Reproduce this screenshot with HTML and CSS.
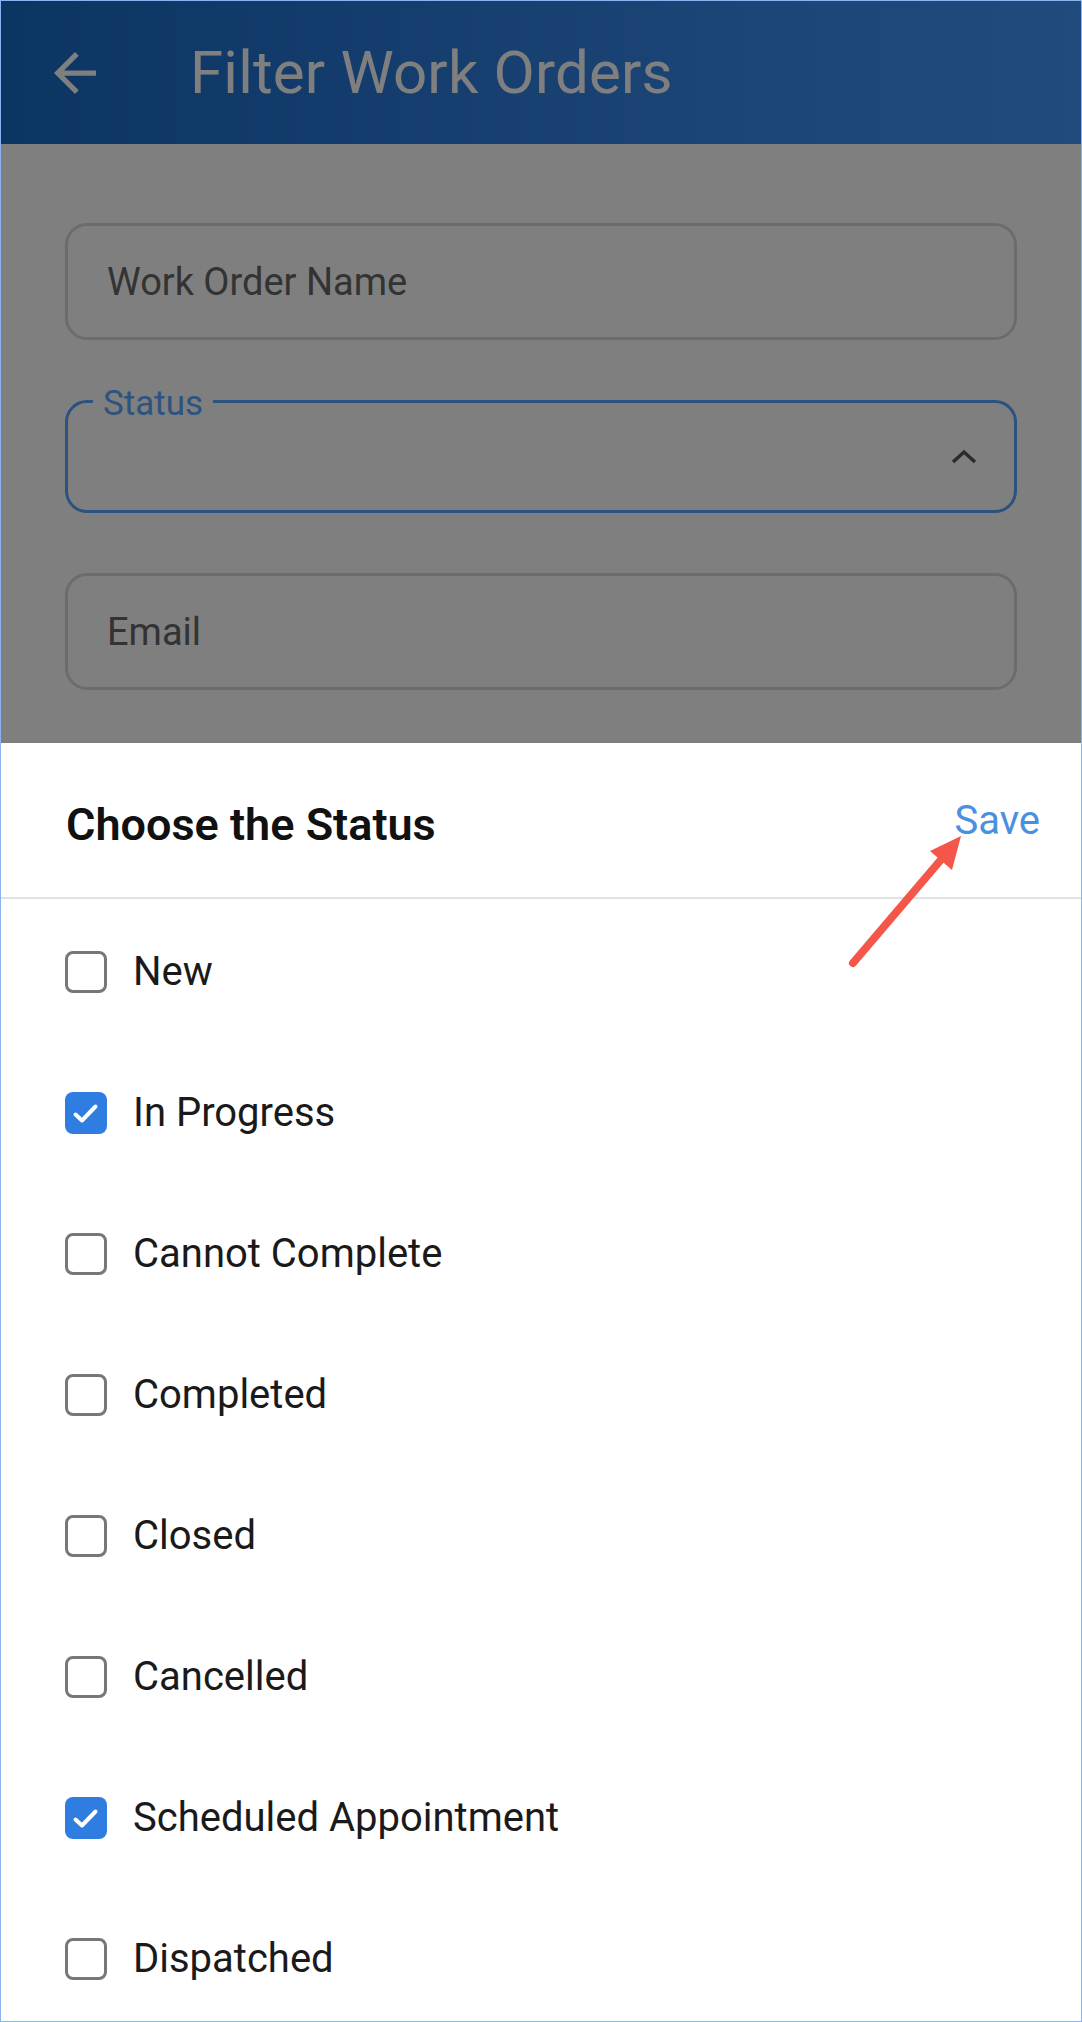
FILE: index.html
```html
<!DOCTYPE html>
<html lang="en">
<head>
    <meta charset="UTF-8">
    <meta name="viewport" content="width=device-width, initial-scale=1.0">
    <title>Filter Work Orders</title>
    <link rel="stylesheet" href="styles.css">
</head>
<body>

    <div class="screen">

        <!-- Page behind the sheet -->
        <div class="page">
            <header class="app-bar">
                <span class="back-btn">
                    <svg viewBox="4 4 16 16" width="42" height="42">
                        <path d="M20 11H7.83l5.59-5.59L12 4l-8 8 8 8 1.41-1.41L7.83 13H20v-2z" fill="#fff"/>
                    </svg>
                </span>
                <h1 class="app-title">Filter Work Orders</h1>
            </header>

            <div class="filter-form">
                <div class="field">
                    <span class="placeholder">Work Order Name</span>
                </div>
                <div class="field field-active">
                    <span class="field-label">Status</span>
                    <svg class="chevron" viewBox="0 0 26 15" width="26" height="15">
                        <polyline points="2,13 13,3 24,13" fill="none" stroke="#55555f" stroke-width="3.5"/>
                    </svg>
                </div>
                <div class="field">
                    <span class="placeholder">Email</span>
                </div>
            </div>

            <!-- dim layer -->
            <div class="scrim"></div>
        </div>

        <!-- Bottom sheet -->
        <div class="sheet">
            <div class="sheet-head">
                <h2 class="sheet-title">Choose the Status</h2>
                <span class="save-btn">Save</span>
            </div>

            <ul class="status-list">
                <li class="status-item"><span class="check"></span>New</li>
                <li class="status-item"><span class="check checked"><svg viewBox="0 0 42 42" width="42" height="42"><polyline points="10.5,22.5 17,28.5 30.5,14.5" fill="none" stroke="#fff" stroke-width="4" stroke-linecap="round" stroke-linejoin="round"/></svg></span>In Progress</li>
                <li class="status-item"><span class="check"></span>Cannot Complete</li>
                <li class="status-item"><span class="check"></span>Completed</li>
                <li class="status-item"><span class="check"></span>Closed</li>
                <li class="status-item"><span class="check"></span>Cancelled</li>
                <li class="status-item"><span class="check checked"><svg viewBox="0 0 42 42" width="42" height="42"><polyline points="10.5,22.5 17,28.5 30.5,14.5" fill="none" stroke="#fff" stroke-width="4" stroke-linecap="round" stroke-linejoin="round"/></svg></span>Scheduled Appointment</li>
                <li class="status-item"><span class="check"></span>Dispatched</li>
            </ul>

            <!-- annotation arrow pointing at Save -->
            <svg class="pointer" viewBox="0 0 140 160" width="140" height="160">
                <line x1="12" y1="140" x2="104" y2="32" stroke="#f4564a" stroke-width="8" stroke-linecap="round"/>
                <polygon points="120,13 89,28 111,47" fill="#f4564a"/>
            </svg>
        </div>

    </div>

</body>
</html>
```

FILE: styles.css
```css
* {
    margin: 0;
    padding: 0;
    box-sizing: border-box;
    font-family: Roboto, "Liberation Sans", Arial, sans-serif;
}

body {
    width: 1082px;
    height: 2022px;
    background: #fff;
}

/* Phone screen with thin frame */
.screen {
    width: 1082px;
    height: 2022px;
    border: 1px solid #8ab4f0;
    overflow: hidden;
    display: flex;
    flex-direction: column;
}

/* Page under the sheet */
.page {
    position: relative;
    flex-shrink: 0;
    height: 742px;
    background: #fff;
}

.app-bar {
    height: 143px;
    display: flex;
    align-items: center;
    padding-left: 53px;
    background: linear-gradient(90deg, #176ac6 0%, #3a8cf0 70%, #4296f8 100%);
}

.back-btn {
    display: flex;
    width: 42px;
    height: 42px;
}

.app-title {
    margin-left: 94px;
    font-size: 60px;
    font-weight: 400;
    color: #fff;
    letter-spacing: 0.2px;
}

.filter-form {
    display: flex;
    flex-direction: column;
    gap: 60px;
    padding: 79px 64px 0;
}

.field {
    position: relative;
    height: 117px;
    border: 3px solid #d8d8dc;
    border-radius: 22px;
    display: flex;
    align-items: center;
    padding: 0 39px;
}

.placeholder {
    font-size: 38px;
    line-height: 1;
    color: #666;
}

.field-active {
    height: 113px;
    border-color: #58a4ff;
    justify-content: flex-end;
    padding-right: 37px;
}

.field-label {
    position: absolute;
    left: 25px;
    top: -17px;
    padding: 0 10px;
    background: #fff;
    font-size: 35px;
    line-height: 35px;
    color: #5aa6ff;
}

.chevron {
    display: block;
}

/* Dim layer over the page */
.scrim {
    position: absolute;
    inset: 0;
    background: rgba(0, 0, 0, 0.5);
}

/* Bottom sheet */
.sheet {
    position: relative;
    flex: 1;
    min-height: 0;
    background: #fff;
}

.sheet-head {
    height: 156px;
    display: flex;
    align-items: center;
    justify-content: space-between;
    padding: 8px 41px 0 65px;
    border-bottom: 2px solid #dee2e6;
}

.sheet-title {
    font-size: 45px;
    font-weight: 600;
    color: #111;
}

.save-btn {
    margin-bottom: 8px;
    font-size: 40px;
    color: #4a90e2;
}

.status-list {
    list-style: none;
    margin-top: 2px;
}

.status-item {
    height: 141px;
    display: flex;
    align-items: center;
    gap: 26px;
    padding-left: 64px;
    font-size: 40px;
    color: #1a1a1a;
}

.check {
    width: 42px;
    height: 42px;
    border: 3.5px solid #777;
    border-radius: 8px;
    display: flex;
    align-items: center;
    justify-content: center;
}

.check.checked {
    border: none;
    background: #2f7de1;
}

.pointer {
    position: absolute;
    left: 840px;
    top: 80px;
}
```
